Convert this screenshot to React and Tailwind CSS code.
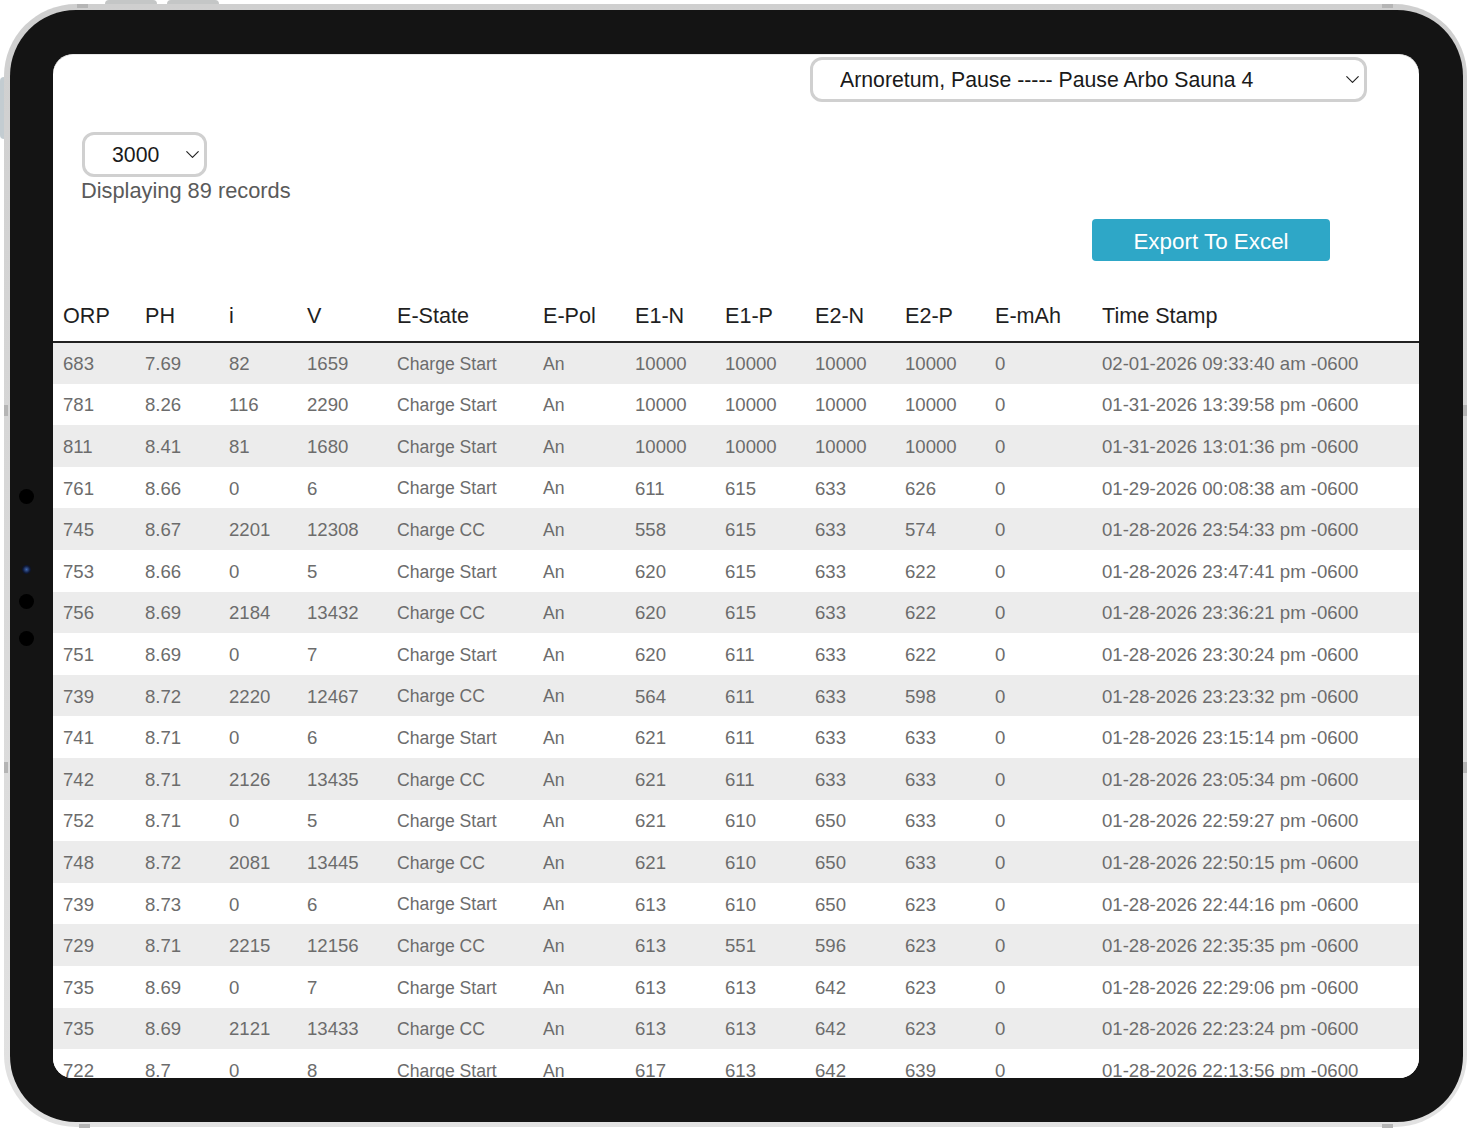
import { ChevronDown } from "lucide-react";

const columns = [
  { name: "ORP", width: "w-[82px]" },
  { name: "PH", width: "w-[84px]" },
  { name: "i", width: "w-[78px]" },
  { name: "V", width: "w-[90px]" },
  { name: "E-State", width: "w-[146px]" },
  { name: "E-Pol", width: "w-[92px]" },
  { name: "E1-N", width: "w-[90px]" },
  { name: "E1-P", width: "w-[90px]" },
  { name: "E2-N", width: "w-[90px]" },
  { name: "E2-P", width: "w-[90px]" },
  { name: "E-mAh", width: "w-[107px]" },
  { name: "Time Stamp", width: "w-[327px]" },
];

const rows = [
  ["683", "7.69", "82", "1659", "Charge Start", "An", "10000", "10000", "10000", "10000", "0", "02-01-2026 09:33:40 am -0600"],
  ["781", "8.26", "116", "2290", "Charge Start", "An", "10000", "10000", "10000", "10000", "0", "01-31-2026 13:39:58 pm -0600"],
  ["811", "8.41", "81", "1680", "Charge Start", "An", "10000", "10000", "10000", "10000", "0", "01-31-2026 13:01:36 pm -0600"],
  ["761", "8.66", "0", "6", "Charge Start", "An", "611", "615", "633", "626", "0", "01-29-2026 00:08:38 am -0600"],
  ["745", "8.67", "2201", "12308", "Charge CC", "An", "558", "615", "633", "574", "0", "01-28-2026 23:54:33 pm -0600"],
  ["753", "8.66", "0", "5", "Charge Start", "An", "620", "615", "633", "622", "0", "01-28-2026 23:47:41 pm -0600"],
  ["756", "8.69", "2184", "13432", "Charge CC", "An", "620", "615", "633", "622", "0", "01-28-2026 23:36:21 pm -0600"],
  ["751", "8.69", "0", "7", "Charge Start", "An", "620", "611", "633", "622", "0", "01-28-2026 23:30:24 pm -0600"],
  ["739", "8.72", "2220", "12467", "Charge CC", "An", "564", "611", "633", "598", "0", "01-28-2026 23:23:32 pm -0600"],
  ["741", "8.71", "0", "6", "Charge Start", "An", "621", "611", "633", "633", "0", "01-28-2026 23:15:14 pm -0600"],
  ["742", "8.71", "2126", "13435", "Charge CC", "An", "621", "611", "633", "633", "0", "01-28-2026 23:05:34 pm -0600"],
  ["752", "8.71", "0", "5", "Charge Start", "An", "621", "610", "650", "633", "0", "01-28-2026 22:59:27 pm -0600"],
  ["748", "8.72", "2081", "13445", "Charge CC", "An", "621", "610", "650", "633", "0", "01-28-2026 22:50:15 pm -0600"],
  ["739", "8.73", "0", "6", "Charge Start", "An", "613", "610", "650", "623", "0", "01-28-2026 22:44:16 pm -0600"],
  ["729", "8.71", "2215", "12156", "Charge CC", "An", "613", "551", "596", "623", "0", "01-28-2026 22:35:35 pm -0600"],
  ["735", "8.69", "0", "7", "Charge Start", "An", "613", "613", "642", "623", "0", "01-28-2026 22:29:06 pm -0600"],
  ["735", "8.69", "2121", "13433", "Charge CC", "An", "613", "613", "642", "623", "0", "01-28-2026 22:23:24 pm -0600"],
  ["722", "8.7", "0", "8", "Charge Start", "An", "617", "613", "642", "639", "0", "01-28-2026 22:13:56 pm -0600"],
];

const Select = ({ value, className }) => (
  <div className={`relative ${className}`}>
    <select
      defaultValue={value}
      className="w-full h-full appearance-none bg-white border-[3px] border-[#d0d0d0] rounded-[12px] pl-[27px] pt-[2px] text-[21.25px] text-[#1a1a1a] outline-none"
    >
      <option>{value}</option>
    </select>
    <ChevronDown
      size={23}
      strokeWidth={1.2}
      className="absolute inset-y-0 right-[3px] my-auto text-[#222] pointer-events-none"
    />
  </div>
);

const Band = ({ className }) => <div className={`bg-[#b5b5b5] ${className}`}></div>;

export default function App() {
  return (
    <div className="relative w-[1468px] h-[1128px] bg-white overflow-hidden font-['Liberation_Sans',Arial,sans-serif]">
      {/* hardware buttons */}
      <div className="absolute left-[105px] top-0 flex gap-[10px]">
        <div className="w-[52px] h-[4px] rounded-t-md bg-[#c4c6c6]"></div>
        <div className="w-[52px] h-[4px] rounded-t-md bg-[#c4c6c6]"></div>
      </div>
      <div className="absolute left-0 top-[77px] w-[4px] h-[62px] rounded-l-md bg-[#c3ccd1]"></div>

      {/* device body */}
      <div className="absolute left-[4px] top-[4px] w-[1463px] h-[1123px] rounded-[72px] bg-gradient-to-b from-[#cfcfcf] to-[#e2e2e2] pl-[6px] pt-[6px] pr-[4px] pb-[5px]">
        <div className="w-full h-full rounded-[66px] bg-[#141414] pl-[43px] pt-[44px] pr-[44px] pb-[44px]">
          <div className="w-[1366px] h-[1024px] rounded-[20px] bg-white overflow-hidden border-t border-[#e8e8e8]">
            <div className="flex justify-end pt-[2px] pr-[52px]">
              <Select value="Arnoretum, Pause ----- Pause Arbo Sauna 4" className="w-[557px] h-[45px]" />
            </div>
            <div className="pl-[29px] pt-[30px]">
              <Select value="3000" className="w-[125px] h-[45px]" />
              <div className="-ml-px text-[21.8px] leading-[28px] text-[#5a5a5a]">Displaying 89 records</div>
            </div>
            <div className="flex justify-end pr-[89px] mt-[14px]">
              <button className="w-[238px] h-[42px] rounded-[4px] bg-[#2ea7c7] pt-[3px] text-white text-[22.4px]">
                Export To Excel
              </button>
            </div>
            <table className="mt-[29px] w-[1366px] table-fixed border-collapse">
              <thead>
                <tr className="h-[52px] border-b-2 border-[#222]">
                  {columns.map((col) => (
                    <th key={col.name} className={`${col.width} px-[10px] pt-[2px] text-left font-normal text-[21.6px] text-[#1f1f1f]`}>
                      {col.name}
                    </th>
                  ))}
                </tr>
              </thead>
              <tbody>
                {rows.map((row, i) => (
                  <tr key={i} className={`h-[41.6px] ${i % 2 === 0 ? "bg-[#ececec]" : "bg-white"}`}>
                    {row.map((cell, j) => (
                      <td
                        key={j}
                        className={`px-[10px] pt-[2px] text-[#6c6c6c] whitespace-nowrap ${j === 4 || j === 5 ? "text-[17.6px]" : "text-[18.6px]"}`}
                      >
                        {cell}
                      </td>
                    ))}
                  </tr>
                ))}
              </tbody>
            </table>
          </div>
        </div>
      </div>

      {/* camera and sensors */}
      <div className="absolute left-[19px] top-[489px] w-[15px] flex flex-col items-center">
        <div className="w-[15px] h-[15px] rounded-full bg-black"></div>
        <div className="mt-[61px] w-[9px] h-[9px] rounded-full bg-[radial-gradient(circle,#3f66b0_0%,#101a38_55%,#05070f_100%)]"></div>
        <div className="mt-[20px] w-[15px] h-[15px] rounded-full bg-black"></div>
        <div className="mt-[22px] w-[15px] h-[15px] rounded-full bg-black"></div>
      </div>

      {/* antenna bands */}
      <div className="absolute left-[77px] top-[4px] w-[1316px] flex justify-between">
        <Band className="w-[11px] h-[4px]" />
        <Band className="w-[11px] h-[4px]" />
      </div>
      <div className="absolute left-[79px] top-[1124px] w-[1314px] flex justify-between">
        <Band className="w-[11px] h-[4px]" />
        <Band className="w-[11px] h-[4px]" />
      </div>
      <div className="absolute left-[4px] top-[405px] w-[1463px] h-[368px] flex justify-between">
        <div className="flex flex-col justify-between">
          <Band className="w-[4px] h-[11px]" />
          <Band className="w-[4px] h-[11px]" />
        </div>
        <div className="flex flex-col justify-between">
          <Band className="w-[4px] h-[11px]" />
          <Band className="w-[4px] h-[11px]" />
        </div>
      </div>
    </div>
  );
}
